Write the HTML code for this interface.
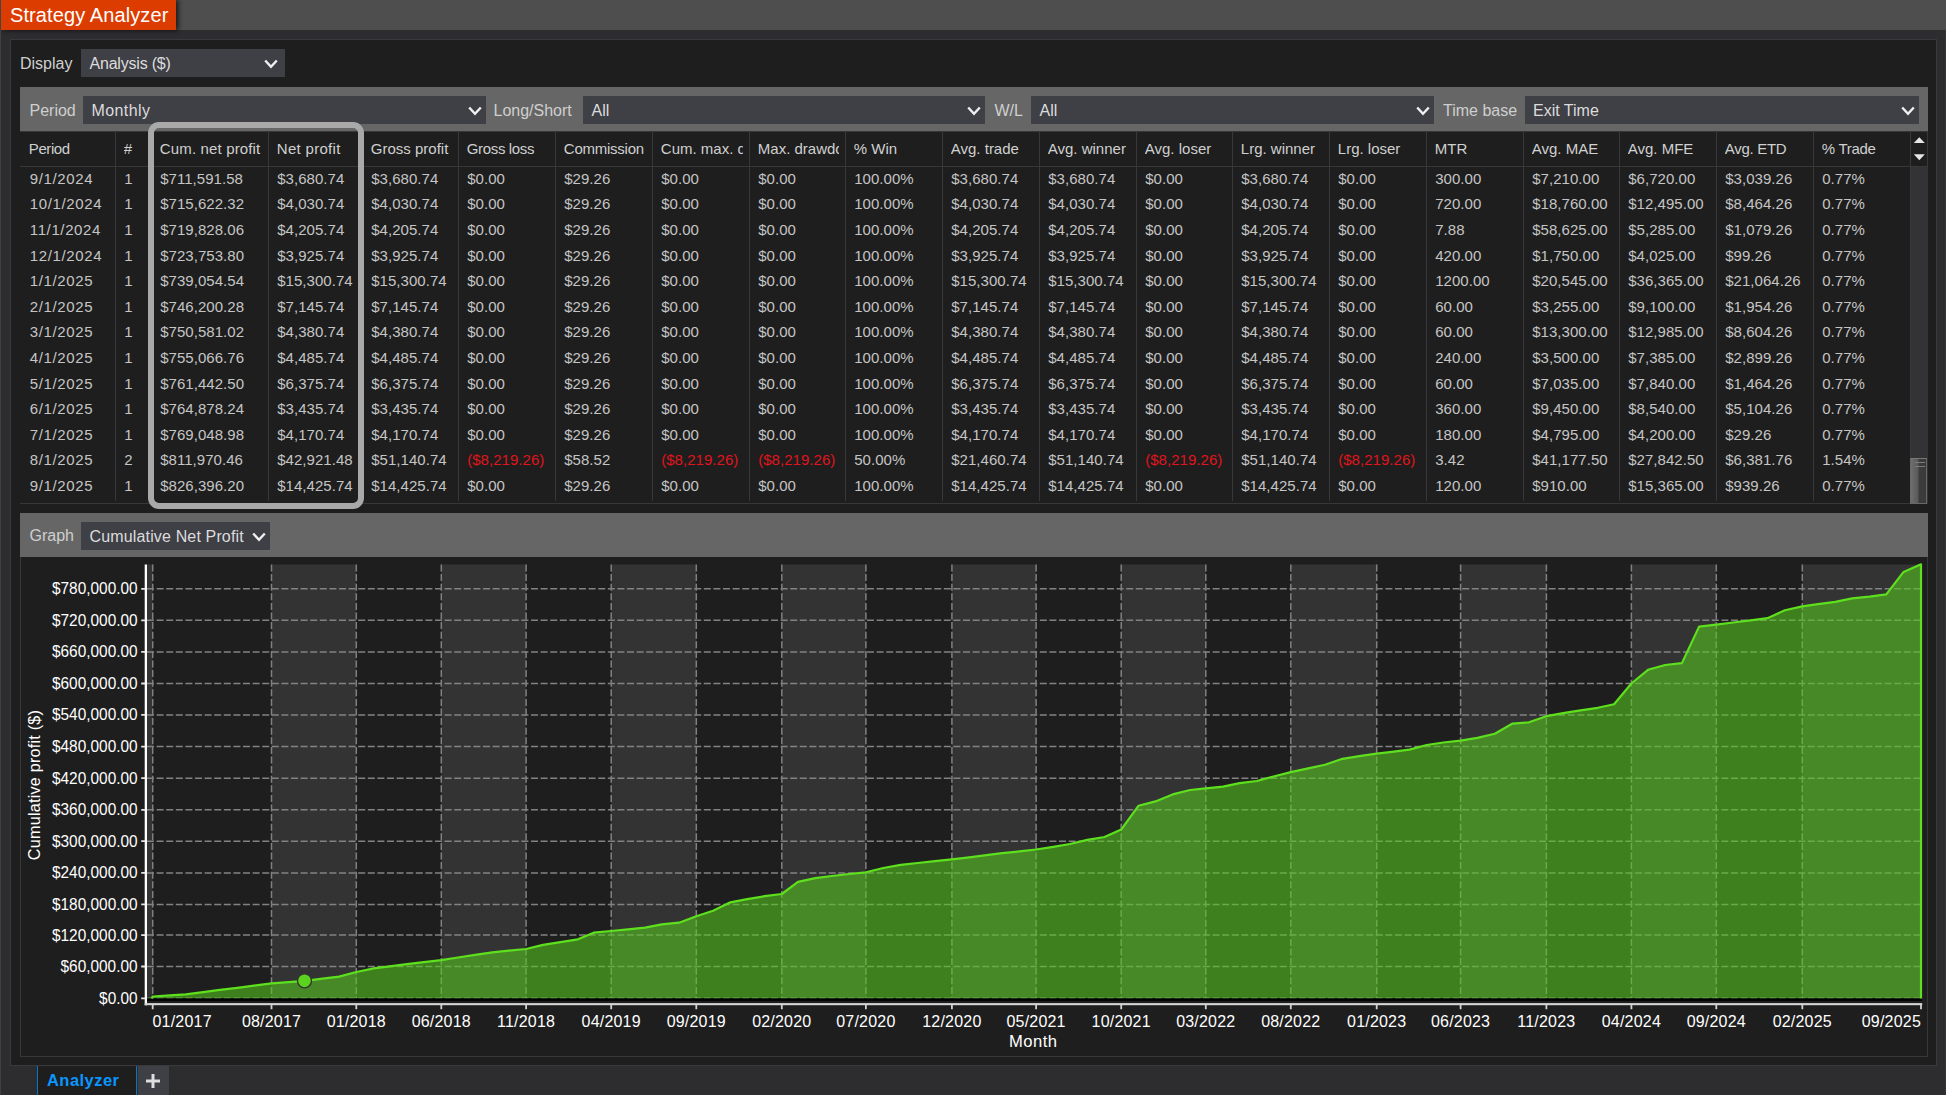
<!DOCTYPE html>
<html lang="en"><head><meta charset="utf-8"><title>Strategy Analyzer</title>
<style>
*{box-sizing:border-box}
html,body{margin:0;padding:0}
body{width:1946px;height:1095px;overflow:hidden;background:#2d2d30;position:relative;
 font-family:"Liberation Sans",sans-serif;color:#ccc}
.abs{position:absolute}
.t{position:absolute;white-space:nowrap;line-height:1}
#titlebar{left:0;top:0;width:1946px;height:30px;background:#4e4e4e}
#tab{left:1px;top:0;width:175px;height:29.5px;background:#dc3c00;box-shadow:2px 0 5px rgba(0,0,0,.75)}
#tabtxt{left:10px;top:5px;font-size:20px;color:#fff;letter-spacing:0.1px}
#edgeL{left:0;top:30px;width:1px;height:1065px;background:#3f3f44}
#panel{left:10px;top:39px;width:1927px;height:1027px;background:#1e1e1e;border:1px solid #3a3a3e}
.sel{position:absolute;background:#3f3f46}
.lbl{font-size:16px;color:#cfcfcf}
.seltxt{font-size:16px;color:#dcdcdc}
.bar{position:absolute;background:#666}
#tbl{left:20px;top:131px;width:1908px;height:373px;border:1px solid #38383b;border-left:none}
.vs{position:absolute;width:1px;background:#38383b;top:131px;height:370px}
.th{position:absolute;top:139.7px;font-size:15px;color:#d0d0d0;white-space:nowrap;overflow:hidden;line-height:17px;height:18px;letter-spacing:0px}
.td{position:absolute;font-size:15px;color:#c5c5c5;white-space:nowrap;line-height:17px;height:17px;letter-spacing:0.04px}
.dt{letter-spacing:0.62px;margin-left:0.6px}
.neg{color:#e0141c}
#hl{left:148px;top:122px;width:216px;height:387px;border:6px solid #a9a9a9;border-radius:11px}
#chartbox{left:20px;top:557px;width:1908px;height:499.5px;border:1px solid #38383b;border-top:none}
#btab{left:37px;top:1065.5px;width:100px;height:30px;background:#1e1e1e;border-left:1px solid #0b74c4;border-right:1px solid #0b74c4}
#btabtxt{left:47px;top:1071.5px;font-size:16.5px;font-weight:bold;color:#0a96ff;letter-spacing:0.45px}
#bplus{left:137.5px;top:1065.5px;width:31px;height:30px;background:#3f3f46}
</style></head><body>
<div id="titlebar" class="abs"></div>
<div id="tab" class="abs"></div><div id="tabtxt" class="t">Strategy Analyzer</div>
<div id="edgeL" class="abs"></div>
<div class="abs" style="left:1945px;top:30px;width:1px;height:1065px;background:#36363a"></div>
<div id="panel" class="abs"></div>
<div class="t lbl" style="left:20px;top:55.6px">Display</div>
<div class="sel" style="left:81px;top:49px;width:204px;height:28px"></div><div class="t seltxt" style="left:89.5px;top:55.6px;letter-spacing:-0.2px">Analysis ($)</div><svg class="abs" style="left:263.5px;top:58.5px" width="14" height="10" viewBox="0 0 14 10"><path d="M1.2 1.5 L7 7.8 L12.8 1.5" fill="none" stroke="#f0f0f0" stroke-width="2.4" stroke-linejoin="miter"/></svg>
<div class="bar" style="left:20px;top:87px;width:1908px;height:44px"></div>
<div class="t lbl" style="left:29.5px;top:102.6px">Period</div>
<div class="sel" style="left:83px;top:96px;width:402.5px;height:27.7px"></div><div class="t seltxt" style="left:91.5px;top:102.6px;letter-spacing:0.4px">Monthly</div><svg class="abs" style="left:467.5px;top:105.5px" width="14" height="10" viewBox="0 0 14 10"><path d="M1.2 1.5 L7 7.8 L12.8 1.5" fill="none" stroke="#f0f0f0" stroke-width="2.4" stroke-linejoin="miter"/></svg>
<div class="t lbl" style="left:493.5px;top:102.6px">Long/Short</div>
<div class="sel" style="left:583px;top:96px;width:402px;height:27.7px"></div><div class="t seltxt" style="left:591.5px;top:102.6px">All</div><svg class="abs" style="left:967px;top:105.5px" width="14" height="10" viewBox="0 0 14 10"><path d="M1.2 1.5 L7 7.8 L12.8 1.5" fill="none" stroke="#f0f0f0" stroke-width="2.4" stroke-linejoin="miter"/></svg>
<div class="t lbl" style="left:994.5px;top:102.6px">W/L</div>
<div class="sel" style="left:1031px;top:96px;width:403px;height:27.7px"></div><div class="t seltxt" style="left:1039.5px;top:102.6px">All</div><svg class="abs" style="left:1416px;top:105.5px" width="14" height="10" viewBox="0 0 14 10"><path d="M1.2 1.5 L7 7.8 L12.8 1.5" fill="none" stroke="#f0f0f0" stroke-width="2.4" stroke-linejoin="miter"/></svg>
<div class="t lbl" style="left:1443px;top:102.6px">Time base</div>
<div class="sel" style="left:1524.5px;top:96px;width:394px;height:27.7px"></div><div class="t seltxt" style="left:1533px;top:102.6px">Exit Time</div><svg class="abs" style="left:1900.5px;top:105.5px" width="14" height="10" viewBox="0 0 14 10"><path d="M1.2 1.5 L7 7.8 L12.8 1.5" fill="none" stroke="#f0f0f0" stroke-width="2.4" stroke-linejoin="miter"/></svg>
<div id="tbl" class="abs"></div>
<div class="abs" style="left:20px;top:165.5px;width:1907px;height:1px;background:#38383b"></div>
<div class="vs" style="left:115px"></div>
<div class="vs" style="left:151px"></div>
<div class="vs" style="left:268px"></div>
<div class="vs" style="left:362px"></div>
<div class="vs" style="left:458px"></div>
<div class="vs" style="left:555px"></div>
<div class="vs" style="left:652px"></div>
<div class="vs" style="left:749px"></div>
<div class="vs" style="left:845px"></div>
<div class="vs" style="left:942px"></div>
<div class="vs" style="left:1039px"></div>
<div class="vs" style="left:1136px"></div>
<div class="vs" style="left:1232px"></div>
<div class="vs" style="left:1329px"></div>
<div class="vs" style="left:1426px"></div>
<div class="vs" style="left:1523px"></div>
<div class="vs" style="left:1619px"></div>
<div class="vs" style="left:1716px"></div>
<div class="vs" style="left:1813px"></div>
<div class="vs" style="left:1910px"></div>
<div class="abs" style="left:1911px;top:166.5px;width:16.5px;height:337px;background:#333336"></div>
<div class="abs" style="left:1909.5px;top:457.5px;width:17.5px;height:46px;background:linear-gradient(90deg,#6e6e6e 0%,#5a5a5a 45%,#3c3c3c 55%,#3a3a3a 100%);border:1px solid #686868;border-top-color:#787878"></div>
<div class="abs" style="left:1914.5px;top:461.5px;width:10.5px;height:1px;background:#7c7c7c"></div>
<div class="abs" style="left:1914.5px;top:466px;width:10.5px;height:1px;background:#7c7c7c"></div>
<svg class="abs" style="left:1911px;top:134px" width="17" height="30" viewBox="0 0 17 30"><path d="M8.3 3.2 L13.8 9 L2.8 9 Z M2.8 20.3 L13.8 20.3 L8.3 26.2 Z" fill="#e6e6e6"/></svg>
<div class="th" style="left:28.8px;width:80.4px;letter-spacing:-0.4px">Period</div>
<div class="th" style="left:123.8px;width:21.4px">#</div>
<div class="th" style="left:159.8px;width:102.4px;letter-spacing:0.15px">Cum. net profit</div>
<div class="th" style="left:276.8px;width:79.4px;letter-spacing:0.3px">Net profit</div>
<div class="th" style="left:370.8px;width:81.4px">Gross profit</div>
<div class="th" style="left:466.8px;width:82.4px;letter-spacing:-0.35px">Gross loss</div>
<div class="th" style="left:563.8px;width:82.4px;letter-spacing:-0.25px">Commission</div>
<div class="th" style="left:660.8px;width:82.4px">Cum. max. drawdown</div>
<div class="th" style="left:757.8px;width:81.4px">Max. drawdown</div>
<div class="th" style="left:853.8px;width:82.4px">% Win</div>
<div class="th" style="left:950.8px;width:82.4px">Avg. trade</div>
<div class="th" style="left:1047.8px;width:82.4px">Avg. winner</div>
<div class="th" style="left:1144.8px;width:81.4px">Avg. loser</div>
<div class="th" style="left:1240.8px;width:82.4px">Lrg. winner</div>
<div class="th" style="left:1337.8px;width:82.4px">Lrg. loser</div>
<div class="th" style="left:1434.8px;width:82.4px">MTR</div>
<div class="th" style="left:1531.8px;width:81.4px">Avg. MAE</div>
<div class="th" style="left:1627.8px;width:82.4px">Avg. MFE</div>
<div class="th" style="left:1724.8px;width:82.4px;letter-spacing:-0.3px">Avg. ETD</div>
<div class="th" style="left:1821.8px;width:82.4px;letter-spacing:-0.3px">% Trade</div>
<div class="td dt" style="left:29.2px;top:169.6px">9/1/2024</div>
<div class="td" style="left:124.2px;top:169.6px">1</div>
<div class="td" style="left:160.2px;top:169.6px">$711,591.58</div>
<div class="td" style="left:277.2px;top:169.6px">$3,680.74</div>
<div class="td" style="left:371.2px;top:169.6px">$3,680.74</div>
<div class="td" style="left:467.2px;top:169.6px">$0.00</div>
<div class="td" style="left:564.2px;top:169.6px">$29.26</div>
<div class="td" style="left:661.2px;top:169.6px">$0.00</div>
<div class="td" style="left:758.2px;top:169.6px">$0.00</div>
<div class="td" style="left:854.2px;top:169.6px">100.00%</div>
<div class="td" style="left:951.2px;top:169.6px">$3,680.74</div>
<div class="td" style="left:1048.2px;top:169.6px">$3,680.74</div>
<div class="td" style="left:1145.2px;top:169.6px">$0.00</div>
<div class="td" style="left:1241.2px;top:169.6px">$3,680.74</div>
<div class="td" style="left:1338.2px;top:169.6px">$0.00</div>
<div class="td" style="left:1435.2px;top:169.6px">300.00</div>
<div class="td" style="left:1532.2px;top:169.6px">$7,210.00</div>
<div class="td" style="left:1628.2px;top:169.6px">$6,720.00</div>
<div class="td" style="left:1725.2px;top:169.6px">$3,039.26</div>
<div class="td" style="left:1822.2px;top:169.6px">0.77%</div>
<div class="td dt" style="left:29.2px;top:195.2px">10/1/2024</div>
<div class="td" style="left:124.2px;top:195.2px">1</div>
<div class="td" style="left:160.2px;top:195.2px">$715,622.32</div>
<div class="td" style="left:277.2px;top:195.2px">$4,030.74</div>
<div class="td" style="left:371.2px;top:195.2px">$4,030.74</div>
<div class="td" style="left:467.2px;top:195.2px">$0.00</div>
<div class="td" style="left:564.2px;top:195.2px">$29.26</div>
<div class="td" style="left:661.2px;top:195.2px">$0.00</div>
<div class="td" style="left:758.2px;top:195.2px">$0.00</div>
<div class="td" style="left:854.2px;top:195.2px">100.00%</div>
<div class="td" style="left:951.2px;top:195.2px">$4,030.74</div>
<div class="td" style="left:1048.2px;top:195.2px">$4,030.74</div>
<div class="td" style="left:1145.2px;top:195.2px">$0.00</div>
<div class="td" style="left:1241.2px;top:195.2px">$4,030.74</div>
<div class="td" style="left:1338.2px;top:195.2px">$0.00</div>
<div class="td" style="left:1435.2px;top:195.2px">720.00</div>
<div class="td" style="left:1532.2px;top:195.2px">$18,760.00</div>
<div class="td" style="left:1628.2px;top:195.2px">$12,495.00</div>
<div class="td" style="left:1725.2px;top:195.2px">$8,464.26</div>
<div class="td" style="left:1822.2px;top:195.2px">0.77%</div>
<div class="td dt" style="left:29.2px;top:220.8px">11/1/2024</div>
<div class="td" style="left:124.2px;top:220.8px">1</div>
<div class="td" style="left:160.2px;top:220.8px">$719,828.06</div>
<div class="td" style="left:277.2px;top:220.8px">$4,205.74</div>
<div class="td" style="left:371.2px;top:220.8px">$4,205.74</div>
<div class="td" style="left:467.2px;top:220.8px">$0.00</div>
<div class="td" style="left:564.2px;top:220.8px">$29.26</div>
<div class="td" style="left:661.2px;top:220.8px">$0.00</div>
<div class="td" style="left:758.2px;top:220.8px">$0.00</div>
<div class="td" style="left:854.2px;top:220.8px">100.00%</div>
<div class="td" style="left:951.2px;top:220.8px">$4,205.74</div>
<div class="td" style="left:1048.2px;top:220.8px">$4,205.74</div>
<div class="td" style="left:1145.2px;top:220.8px">$0.00</div>
<div class="td" style="left:1241.2px;top:220.8px">$4,205.74</div>
<div class="td" style="left:1338.2px;top:220.8px">$0.00</div>
<div class="td" style="left:1435.2px;top:220.8px">7.88</div>
<div class="td" style="left:1532.2px;top:220.8px">$58,625.00</div>
<div class="td" style="left:1628.2px;top:220.8px">$5,285.00</div>
<div class="td" style="left:1725.2px;top:220.8px">$1,079.26</div>
<div class="td" style="left:1822.2px;top:220.8px">0.77%</div>
<div class="td dt" style="left:29.2px;top:246.5px">12/1/2024</div>
<div class="td" style="left:124.2px;top:246.5px">1</div>
<div class="td" style="left:160.2px;top:246.5px">$723,753.80</div>
<div class="td" style="left:277.2px;top:246.5px">$3,925.74</div>
<div class="td" style="left:371.2px;top:246.5px">$3,925.74</div>
<div class="td" style="left:467.2px;top:246.5px">$0.00</div>
<div class="td" style="left:564.2px;top:246.5px">$29.26</div>
<div class="td" style="left:661.2px;top:246.5px">$0.00</div>
<div class="td" style="left:758.2px;top:246.5px">$0.00</div>
<div class="td" style="left:854.2px;top:246.5px">100.00%</div>
<div class="td" style="left:951.2px;top:246.5px">$3,925.74</div>
<div class="td" style="left:1048.2px;top:246.5px">$3,925.74</div>
<div class="td" style="left:1145.2px;top:246.5px">$0.00</div>
<div class="td" style="left:1241.2px;top:246.5px">$3,925.74</div>
<div class="td" style="left:1338.2px;top:246.5px">$0.00</div>
<div class="td" style="left:1435.2px;top:246.5px">420.00</div>
<div class="td" style="left:1532.2px;top:246.5px">$1,750.00</div>
<div class="td" style="left:1628.2px;top:246.5px">$4,025.00</div>
<div class="td" style="left:1725.2px;top:246.5px">$99.26</div>
<div class="td" style="left:1822.2px;top:246.5px">0.77%</div>
<div class="td dt" style="left:29.2px;top:272.1px">1/1/2025</div>
<div class="td" style="left:124.2px;top:272.1px">1</div>
<div class="td" style="left:160.2px;top:272.1px">$739,054.54</div>
<div class="td" style="left:277.2px;top:272.1px">$15,300.74</div>
<div class="td" style="left:371.2px;top:272.1px">$15,300.74</div>
<div class="td" style="left:467.2px;top:272.1px">$0.00</div>
<div class="td" style="left:564.2px;top:272.1px">$29.26</div>
<div class="td" style="left:661.2px;top:272.1px">$0.00</div>
<div class="td" style="left:758.2px;top:272.1px">$0.00</div>
<div class="td" style="left:854.2px;top:272.1px">100.00%</div>
<div class="td" style="left:951.2px;top:272.1px">$15,300.74</div>
<div class="td" style="left:1048.2px;top:272.1px">$15,300.74</div>
<div class="td" style="left:1145.2px;top:272.1px">$0.00</div>
<div class="td" style="left:1241.2px;top:272.1px">$15,300.74</div>
<div class="td" style="left:1338.2px;top:272.1px">$0.00</div>
<div class="td" style="left:1435.2px;top:272.1px">1200.00</div>
<div class="td" style="left:1532.2px;top:272.1px">$20,545.00</div>
<div class="td" style="left:1628.2px;top:272.1px">$36,365.00</div>
<div class="td" style="left:1725.2px;top:272.1px">$21,064.26</div>
<div class="td" style="left:1822.2px;top:272.1px">0.77%</div>
<div class="td dt" style="left:29.2px;top:297.7px">2/1/2025</div>
<div class="td" style="left:124.2px;top:297.7px">1</div>
<div class="td" style="left:160.2px;top:297.7px">$746,200.28</div>
<div class="td" style="left:277.2px;top:297.7px">$7,145.74</div>
<div class="td" style="left:371.2px;top:297.7px">$7,145.74</div>
<div class="td" style="left:467.2px;top:297.7px">$0.00</div>
<div class="td" style="left:564.2px;top:297.7px">$29.26</div>
<div class="td" style="left:661.2px;top:297.7px">$0.00</div>
<div class="td" style="left:758.2px;top:297.7px">$0.00</div>
<div class="td" style="left:854.2px;top:297.7px">100.00%</div>
<div class="td" style="left:951.2px;top:297.7px">$7,145.74</div>
<div class="td" style="left:1048.2px;top:297.7px">$7,145.74</div>
<div class="td" style="left:1145.2px;top:297.7px">$0.00</div>
<div class="td" style="left:1241.2px;top:297.7px">$7,145.74</div>
<div class="td" style="left:1338.2px;top:297.7px">$0.00</div>
<div class="td" style="left:1435.2px;top:297.7px">60.00</div>
<div class="td" style="left:1532.2px;top:297.7px">$3,255.00</div>
<div class="td" style="left:1628.2px;top:297.7px">$9,100.00</div>
<div class="td" style="left:1725.2px;top:297.7px">$1,954.26</div>
<div class="td" style="left:1822.2px;top:297.7px">0.77%</div>
<div class="td dt" style="left:29.2px;top:323.3px">3/1/2025</div>
<div class="td" style="left:124.2px;top:323.3px">1</div>
<div class="td" style="left:160.2px;top:323.3px">$750,581.02</div>
<div class="td" style="left:277.2px;top:323.3px">$4,380.74</div>
<div class="td" style="left:371.2px;top:323.3px">$4,380.74</div>
<div class="td" style="left:467.2px;top:323.3px">$0.00</div>
<div class="td" style="left:564.2px;top:323.3px">$29.26</div>
<div class="td" style="left:661.2px;top:323.3px">$0.00</div>
<div class="td" style="left:758.2px;top:323.3px">$0.00</div>
<div class="td" style="left:854.2px;top:323.3px">100.00%</div>
<div class="td" style="left:951.2px;top:323.3px">$4,380.74</div>
<div class="td" style="left:1048.2px;top:323.3px">$4,380.74</div>
<div class="td" style="left:1145.2px;top:323.3px">$0.00</div>
<div class="td" style="left:1241.2px;top:323.3px">$4,380.74</div>
<div class="td" style="left:1338.2px;top:323.3px">$0.00</div>
<div class="td" style="left:1435.2px;top:323.3px">60.00</div>
<div class="td" style="left:1532.2px;top:323.3px">$13,300.00</div>
<div class="td" style="left:1628.2px;top:323.3px">$12,985.00</div>
<div class="td" style="left:1725.2px;top:323.3px">$8,604.26</div>
<div class="td" style="left:1822.2px;top:323.3px">0.77%</div>
<div class="td dt" style="left:29.2px;top:348.9px">4/1/2025</div>
<div class="td" style="left:124.2px;top:348.9px">1</div>
<div class="td" style="left:160.2px;top:348.9px">$755,066.76</div>
<div class="td" style="left:277.2px;top:348.9px">$4,485.74</div>
<div class="td" style="left:371.2px;top:348.9px">$4,485.74</div>
<div class="td" style="left:467.2px;top:348.9px">$0.00</div>
<div class="td" style="left:564.2px;top:348.9px">$29.26</div>
<div class="td" style="left:661.2px;top:348.9px">$0.00</div>
<div class="td" style="left:758.2px;top:348.9px">$0.00</div>
<div class="td" style="left:854.2px;top:348.9px">100.00%</div>
<div class="td" style="left:951.2px;top:348.9px">$4,485.74</div>
<div class="td" style="left:1048.2px;top:348.9px">$4,485.74</div>
<div class="td" style="left:1145.2px;top:348.9px">$0.00</div>
<div class="td" style="left:1241.2px;top:348.9px">$4,485.74</div>
<div class="td" style="left:1338.2px;top:348.9px">$0.00</div>
<div class="td" style="left:1435.2px;top:348.9px">240.00</div>
<div class="td" style="left:1532.2px;top:348.9px">$3,500.00</div>
<div class="td" style="left:1628.2px;top:348.9px">$7,385.00</div>
<div class="td" style="left:1725.2px;top:348.9px">$2,899.26</div>
<div class="td" style="left:1822.2px;top:348.9px">0.77%</div>
<div class="td dt" style="left:29.2px;top:374.6px">5/1/2025</div>
<div class="td" style="left:124.2px;top:374.6px">1</div>
<div class="td" style="left:160.2px;top:374.6px">$761,442.50</div>
<div class="td" style="left:277.2px;top:374.6px">$6,375.74</div>
<div class="td" style="left:371.2px;top:374.6px">$6,375.74</div>
<div class="td" style="left:467.2px;top:374.6px">$0.00</div>
<div class="td" style="left:564.2px;top:374.6px">$29.26</div>
<div class="td" style="left:661.2px;top:374.6px">$0.00</div>
<div class="td" style="left:758.2px;top:374.6px">$0.00</div>
<div class="td" style="left:854.2px;top:374.6px">100.00%</div>
<div class="td" style="left:951.2px;top:374.6px">$6,375.74</div>
<div class="td" style="left:1048.2px;top:374.6px">$6,375.74</div>
<div class="td" style="left:1145.2px;top:374.6px">$0.00</div>
<div class="td" style="left:1241.2px;top:374.6px">$6,375.74</div>
<div class="td" style="left:1338.2px;top:374.6px">$0.00</div>
<div class="td" style="left:1435.2px;top:374.6px">60.00</div>
<div class="td" style="left:1532.2px;top:374.6px">$7,035.00</div>
<div class="td" style="left:1628.2px;top:374.6px">$7,840.00</div>
<div class="td" style="left:1725.2px;top:374.6px">$1,464.26</div>
<div class="td" style="left:1822.2px;top:374.6px">0.77%</div>
<div class="td dt" style="left:29.2px;top:400.2px">6/1/2025</div>
<div class="td" style="left:124.2px;top:400.2px">1</div>
<div class="td" style="left:160.2px;top:400.2px">$764,878.24</div>
<div class="td" style="left:277.2px;top:400.2px">$3,435.74</div>
<div class="td" style="left:371.2px;top:400.2px">$3,435.74</div>
<div class="td" style="left:467.2px;top:400.2px">$0.00</div>
<div class="td" style="left:564.2px;top:400.2px">$29.26</div>
<div class="td" style="left:661.2px;top:400.2px">$0.00</div>
<div class="td" style="left:758.2px;top:400.2px">$0.00</div>
<div class="td" style="left:854.2px;top:400.2px">100.00%</div>
<div class="td" style="left:951.2px;top:400.2px">$3,435.74</div>
<div class="td" style="left:1048.2px;top:400.2px">$3,435.74</div>
<div class="td" style="left:1145.2px;top:400.2px">$0.00</div>
<div class="td" style="left:1241.2px;top:400.2px">$3,435.74</div>
<div class="td" style="left:1338.2px;top:400.2px">$0.00</div>
<div class="td" style="left:1435.2px;top:400.2px">360.00</div>
<div class="td" style="left:1532.2px;top:400.2px">$9,450.00</div>
<div class="td" style="left:1628.2px;top:400.2px">$8,540.00</div>
<div class="td" style="left:1725.2px;top:400.2px">$5,104.26</div>
<div class="td" style="left:1822.2px;top:400.2px">0.77%</div>
<div class="td dt" style="left:29.2px;top:425.8px">7/1/2025</div>
<div class="td" style="left:124.2px;top:425.8px">1</div>
<div class="td" style="left:160.2px;top:425.8px">$769,048.98</div>
<div class="td" style="left:277.2px;top:425.8px">$4,170.74</div>
<div class="td" style="left:371.2px;top:425.8px">$4,170.74</div>
<div class="td" style="left:467.2px;top:425.8px">$0.00</div>
<div class="td" style="left:564.2px;top:425.8px">$29.26</div>
<div class="td" style="left:661.2px;top:425.8px">$0.00</div>
<div class="td" style="left:758.2px;top:425.8px">$0.00</div>
<div class="td" style="left:854.2px;top:425.8px">100.00%</div>
<div class="td" style="left:951.2px;top:425.8px">$4,170.74</div>
<div class="td" style="left:1048.2px;top:425.8px">$4,170.74</div>
<div class="td" style="left:1145.2px;top:425.8px">$0.00</div>
<div class="td" style="left:1241.2px;top:425.8px">$4,170.74</div>
<div class="td" style="left:1338.2px;top:425.8px">$0.00</div>
<div class="td" style="left:1435.2px;top:425.8px">180.00</div>
<div class="td" style="left:1532.2px;top:425.8px">$4,795.00</div>
<div class="td" style="left:1628.2px;top:425.8px">$4,200.00</div>
<div class="td" style="left:1725.2px;top:425.8px">$29.26</div>
<div class="td" style="left:1822.2px;top:425.8px">0.77%</div>
<div class="td dt" style="left:29.2px;top:451.4px">8/1/2025</div>
<div class="td" style="left:124.2px;top:451.4px">2</div>
<div class="td" style="left:160.2px;top:451.4px">$811,970.46</div>
<div class="td" style="left:277.2px;top:451.4px">$42,921.48</div>
<div class="td" style="left:371.2px;top:451.4px">$51,140.74</div>
<div class="td neg" style="left:467.2px;top:451.4px">($8,219.26)</div>
<div class="td" style="left:564.2px;top:451.4px">$58.52</div>
<div class="td neg" style="left:661.2px;top:451.4px">($8,219.26)</div>
<div class="td neg" style="left:758.2px;top:451.4px">($8,219.26)</div>
<div class="td" style="left:854.2px;top:451.4px">50.00%</div>
<div class="td" style="left:951.2px;top:451.4px">$21,460.74</div>
<div class="td" style="left:1048.2px;top:451.4px">$51,140.74</div>
<div class="td neg" style="left:1145.2px;top:451.4px">($8,219.26)</div>
<div class="td" style="left:1241.2px;top:451.4px">$51,140.74</div>
<div class="td neg" style="left:1338.2px;top:451.4px">($8,219.26)</div>
<div class="td" style="left:1435.2px;top:451.4px">3.42</div>
<div class="td" style="left:1532.2px;top:451.4px">$41,177.50</div>
<div class="td" style="left:1628.2px;top:451.4px">$27,842.50</div>
<div class="td" style="left:1725.2px;top:451.4px">$6,381.76</div>
<div class="td" style="left:1822.2px;top:451.4px">1.54%</div>
<div class="td dt" style="left:29.2px;top:477px">9/1/2025</div>
<div class="td" style="left:124.2px;top:477px">1</div>
<div class="td" style="left:160.2px;top:477px">$826,396.20</div>
<div class="td" style="left:277.2px;top:477px">$14,425.74</div>
<div class="td" style="left:371.2px;top:477px">$14,425.74</div>
<div class="td" style="left:467.2px;top:477px">$0.00</div>
<div class="td" style="left:564.2px;top:477px">$29.26</div>
<div class="td" style="left:661.2px;top:477px">$0.00</div>
<div class="td" style="left:758.2px;top:477px">$0.00</div>
<div class="td" style="left:854.2px;top:477px">100.00%</div>
<div class="td" style="left:951.2px;top:477px">$14,425.74</div>
<div class="td" style="left:1048.2px;top:477px">$14,425.74</div>
<div class="td" style="left:1145.2px;top:477px">$0.00</div>
<div class="td" style="left:1241.2px;top:477px">$14,425.74</div>
<div class="td" style="left:1338.2px;top:477px">$0.00</div>
<div class="td" style="left:1435.2px;top:477px">120.00</div>
<div class="td" style="left:1532.2px;top:477px">$910.00</div>
<div class="td" style="left:1628.2px;top:477px">$15,365.00</div>
<div class="td" style="left:1725.2px;top:477px">$939.26</div>
<div class="td" style="left:1822.2px;top:477px">0.77%</div>
<div id="hl" class="abs"></div>
<div class="bar" style="left:20px;top:512.5px;width:1908px;height:44.5px"></div>
<div class="t lbl" style="left:29.5px;top:528.1px">Graph</div>
<div class="sel" style="left:81px;top:522px;width:189px;height:27.7px"></div><div class="t seltxt" style="left:89.5px;top:528.6px;letter-spacing:0.15px">Cumulative Net Profit</div><svg class="abs" style="left:252px;top:531.5px" width="14" height="10" viewBox="0 0 14 10"><path d="M1.2 1.5 L7 7.8 L12.8 1.5" fill="none" stroke="#f0f0f0" stroke-width="2.4" stroke-linejoin="miter"/></svg>
<div id="chartbox" class="abs"></div>
<svg class="abs" style="left:0;top:0" width="1946" height="1095" viewBox="0 0 1946 1095" font-family="Liberation Sans, sans-serif">
<rect x="147" y="564.5" width="5.7" height="434" fill="#333"/>
<rect x="271.5" y="564.5" width="84.8" height="434" fill="#333"/>
<rect x="441.3" y="564.5" width="84.8" height="434" fill="#333"/>
<rect x="611.2" y="564.5" width="85.1" height="434" fill="#333"/>
<rect x="781.8" y="564.5" width="84.1" height="434" fill="#333"/>
<rect x="951.9" y="564.5" width="84.2" height="434" fill="#333"/>
<rect x="1121.2" y="564.5" width="84.6" height="434" fill="#333"/>
<rect x="1290.8" y="564.5" width="85.9" height="434" fill="#333"/>
<rect x="1460.6" y="564.5" width="85.8" height="434" fill="#333"/>
<rect x="1631.4" y="564.5" width="84.9" height="434" fill="#333"/>
<rect x="1802.3" y="564.5" width="118.7" height="434" fill="#333"/>
<path d="M147 998.3 H1921 M147 966.5 H1921 M147 935.1 H1921 M147 904.4 H1921 M147 872.9 H1921 M147 841.2 H1921 M147 809.8 H1921 M147 778.2 H1921 M147 746.6 H1921 M147 714.9 H1921 M147 683.5 H1921 M147 651.9 H1921 M147 620.3 H1921 M147 588.8 H1921" stroke="#828282" stroke-width="1.5" stroke-dasharray="7 2.6" fill="none"/>
<path d="M152.7 564.5 V998.5 M271.5 564.5 V998.5 M356.3 564.5 V998.5 M441.3 564.5 V998.5 M526.1 564.5 V998.5 M611.2 564.5 V998.5 M696.3 564.5 V998.5 M781.8 564.5 V998.5 M865.9 564.5 V998.5 M951.9 564.5 V998.5 M1036.1 564.5 V998.5 M1121.2 564.5 V998.5 M1205.8 564.5 V998.5 M1290.8 564.5 V998.5 M1376.7 564.5 V998.5 M1460.6 564.5 V998.5 M1546.4 564.5 V998.5 M1631.4 564.5 V998.5 M1716.3 564.5 V998.5 M1802.3 564.5 V998.5" stroke="#808080" stroke-width="1.5" stroke-dasharray="7 2.6" fill="none"/>
<path d="M152.7 998.5 L152.7 996.5 L170.1 995.4 L185.8 994.3 L203.1 992.1 L219.9 989.9 L237.3 987.8 L254.1 985.6 L271.5 983.4 L288.7 982.1 L305.3 980.8 L322.5 978.7 L339.1 976.6 L356.3 972 L373.8 968.4 L389.5 966.3 L407 964.2 L423.8 962.2 L441.3 960.1 L457.9 957.5 L475.1 954.9 L492.3 952.3 L508.9 950.6 L526.1 949 L543 944.9 L560.5 942.1 L577.9 939.3 L593.7 932.7 L611.2 931 L627.9 929.4 L645.1 927.7 L661.8 924.4 L679.1 922.7 L696.3 916.2 L713.1 910.7 L730.4 902.3 L747.2 899.2 L764.5 896.2 L781.8 894 L798 881.8 L815.2 878.1 L831.9 876 L849.2 874 L865.9 872.3 L883.3 868 L900.7 864.9 L917.6 863 L935 861.2 L951.9 859.3 L969.2 857.3 L986.5 855.2 L1002.1 853.2 L1019.4 851.4 L1036.1 849.5 L1053.3 846.9 L1070 844 L1087.3 839.9 L1104.5 837 L1121.2 829.6 L1138.6 805.7 L1155.4 801.4 L1172.7 794.4 L1190.1 790 L1205.8 788.4 L1223 786.6 L1239.7 783.2 L1256.9 781 L1273.6 776.5 L1290.8 772.1 L1308.2 768.4 L1325 764.7 L1342.5 758.8 L1359.3 756.2 L1376.7 753.6 L1393.9 751.6 L1409.5 749.6 L1426.7 745 L1443.4 742.5 L1460.6 740.7 L1477.4 737.9 L1494.8 733.7 L1512.2 723.7 L1529 722.3 L1546.4 716.2 L1563.2 713.2 L1580.5 710.3 L1597.8 707.8 L1614.1 704.2 L1631.4 683.5 L1648 669.8 L1665.2 665 L1681.9 663.1 L1699.1 626.6 L1716.3 624.6 L1733.2 622.5 L1750.6 620.3 L1767.5 618.2 L1784.9 610.2 L1802.3 606.4 L1818 604.1 L1835.3 601.8 L1852.1 598.4 L1869.5 596.6 L1886.3 594.4 L1903.6 571.9 L1921 564.3 L1921 998.5 Z" fill="#56c81e" fill-opacity="0.57"/>
<rect x="147" y="998.3" width="1775" height="2.5" fill="#000"/>
<path d="M151.7 998.5 L152.7 996.5 L170.1 995.4 L185.8 994.3 L203.1 992.1 L219.9 989.9 L237.3 987.8 L254.1 985.6 L271.5 983.4 L288.7 982.1 L305.3 980.8 L322.5 978.7 L339.1 976.6 L356.3 972 L373.8 968.4 L389.5 966.3 L407 964.2 L423.8 962.2 L441.3 960.1 L457.9 957.5 L475.1 954.9 L492.3 952.3 L508.9 950.6 L526.1 949 L543 944.9 L560.5 942.1 L577.9 939.3 L593.7 932.7 L611.2 931 L627.9 929.4 L645.1 927.7 L661.8 924.4 L679.1 922.7 L696.3 916.2 L713.1 910.7 L730.4 902.3 L747.2 899.2 L764.5 896.2 L781.8 894 L798 881.8 L815.2 878.1 L831.9 876 L849.2 874 L865.9 872.3 L883.3 868 L900.7 864.9 L917.6 863 L935 861.2 L951.9 859.3 L969.2 857.3 L986.5 855.2 L1002.1 853.2 L1019.4 851.4 L1036.1 849.5 L1053.3 846.9 L1070 844 L1087.3 839.9 L1104.5 837 L1121.2 829.6 L1138.6 805.7 L1155.4 801.4 L1172.7 794.4 L1190.1 790 L1205.8 788.4 L1223 786.6 L1239.7 783.2 L1256.9 781 L1273.6 776.5 L1290.8 772.1 L1308.2 768.4 L1325 764.7 L1342.5 758.8 L1359.3 756.2 L1376.7 753.6 L1393.9 751.6 L1409.5 749.6 L1426.7 745 L1443.4 742.5 L1460.6 740.7 L1477.4 737.9 L1494.8 733.7 L1512.2 723.7 L1529 722.3 L1546.4 716.2 L1563.2 713.2 L1580.5 710.3 L1597.8 707.8 L1614.1 704.2 L1631.4 683.5 L1648 669.8 L1665.2 665 L1681.9 663.1 L1699.1 626.6 L1716.3 624.6 L1733.2 622.5 L1750.6 620.3 L1767.5 618.2 L1784.9 610.2 L1802.3 606.4 L1818 604.1 L1835.3 601.8 L1852.1 598.4 L1869.5 596.6 L1886.3 594.4 L1903.6 571.9 L1921 564.3 L1921 998.5" fill="none" stroke="#5ee01e" stroke-width="2.2" stroke-linejoin="round"/>
<circle cx="304.5" cy="980.8" r="7" fill="#5ad21e" stroke="#333" stroke-width="1.3"/>
<rect x="144.7" y="564.5" width="2.3" height="440.8" fill="#fff"/>
<rect x="144.7" y="1003.1" width="1777.5" height="2.1" fill="#d4d4d4"/>
<path d="M152.7 1005 V1009.2 M271.5 1005 V1009.2 M356.3 1005 V1009.2 M441.3 1005 V1009.2 M526.1 1005 V1009.2 M611.2 1005 V1009.2 M696.3 1005 V1009.2 M781.8 1005 V1009.2 M865.9 1005 V1009.2 M951.9 1005 V1009.2 M1036.1 1005 V1009.2 M1121.2 1005 V1009.2 M1205.8 1005 V1009.2 M1290.8 1005 V1009.2 M1376.7 1005 V1009.2 M1460.6 1005 V1009.2 M1546.4 1005 V1009.2 M1631.4 1005 V1009.2 M1716.3 1005 V1009.2 M1802.3 1005 V1009.2 M1921 1005 V1009.2" stroke="#d0d0d0" stroke-width="1.8" fill="none"/>
<path d="M141.2 998.3 H145 M141.2 966.5 H145 M141.2 935.1 H145 M141.2 904.4 H145 M141.2 872.9 H145 M141.2 841.2 H145 M141.2 809.8 H145 M141.2 778.2 H145 M141.2 746.6 H145 M141.2 714.9 H145 M141.2 683.5 H145 M141.2 651.9 H145 M141.2 620.3 H145 M141.2 588.8 H145" stroke="#e4e4e4" stroke-width="1.8" fill="none"/>
<text x="99.1" y="1003.8" font-size="16.4" textLength="38.5" lengthAdjust="spacingAndGlyphs" fill="#fff">$0.00</text>
<text x="60.5" y="972" font-size="16.4" textLength="77.1" lengthAdjust="spacingAndGlyphs" fill="#fff">$60,000.00</text>
<text x="52" y="940.6" font-size="16.4" textLength="85.6" lengthAdjust="spacingAndGlyphs" fill="#fff">$120,000.00</text>
<text x="52" y="909.9" font-size="16.4" textLength="85.6" lengthAdjust="spacingAndGlyphs" fill="#fff">$180,000.00</text>
<text x="52" y="878.4" font-size="16.4" textLength="85.6" lengthAdjust="spacingAndGlyphs" fill="#fff">$240,000.00</text>
<text x="52" y="846.7" font-size="16.4" textLength="85.6" lengthAdjust="spacingAndGlyphs" fill="#fff">$300,000.00</text>
<text x="52" y="815.3" font-size="16.4" textLength="85.6" lengthAdjust="spacingAndGlyphs" fill="#fff">$360,000.00</text>
<text x="52" y="783.7" font-size="16.4" textLength="85.6" lengthAdjust="spacingAndGlyphs" fill="#fff">$420,000.00</text>
<text x="52" y="752.1" font-size="16.4" textLength="85.6" lengthAdjust="spacingAndGlyphs" fill="#fff">$480,000.00</text>
<text x="52" y="720.4" font-size="16.4" textLength="85.6" lengthAdjust="spacingAndGlyphs" fill="#fff">$540,000.00</text>
<text x="52" y="689" font-size="16.4" textLength="85.6" lengthAdjust="spacingAndGlyphs" fill="#fff">$600,000.00</text>
<text x="52" y="657.4" font-size="16.4" textLength="85.6" lengthAdjust="spacingAndGlyphs" fill="#fff">$660,000.00</text>
<text x="52" y="625.8" font-size="16.4" textLength="85.6" lengthAdjust="spacingAndGlyphs" fill="#fff">$720,000.00</text>
<text x="52" y="594.2" font-size="16.4" textLength="85.6" lengthAdjust="spacingAndGlyphs" fill="#fff">$780,000.00</text>
<text x="152.5" y="1027" text-anchor="start" font-size="16" letter-spacing="0.2" fill="#fff">01/2017</text>
<text x="271.5" y="1027" text-anchor="middle" font-size="16" letter-spacing="0.2" fill="#fff">08/2017</text>
<text x="356.3" y="1027" text-anchor="middle" font-size="16" letter-spacing="0.2" fill="#fff">01/2018</text>
<text x="441.3" y="1027" text-anchor="middle" font-size="16" letter-spacing="0.2" fill="#fff">06/2018</text>
<text x="526.1" y="1027" text-anchor="middle" font-size="16" letter-spacing="0.2" fill="#fff">11/2018</text>
<text x="611.2" y="1027" text-anchor="middle" font-size="16" letter-spacing="0.2" fill="#fff">04/2019</text>
<text x="696.3" y="1027" text-anchor="middle" font-size="16" letter-spacing="0.2" fill="#fff">09/2019</text>
<text x="781.8" y="1027" text-anchor="middle" font-size="16" letter-spacing="0.2" fill="#fff">02/2020</text>
<text x="865.9" y="1027" text-anchor="middle" font-size="16" letter-spacing="0.2" fill="#fff">07/2020</text>
<text x="951.9" y="1027" text-anchor="middle" font-size="16" letter-spacing="0.2" fill="#fff">12/2020</text>
<text x="1036.1" y="1027" text-anchor="middle" font-size="16" letter-spacing="0.2" fill="#fff">05/2021</text>
<text x="1121.2" y="1027" text-anchor="middle" font-size="16" letter-spacing="0.2" fill="#fff">10/2021</text>
<text x="1205.8" y="1027" text-anchor="middle" font-size="16" letter-spacing="0.2" fill="#fff">03/2022</text>
<text x="1290.8" y="1027" text-anchor="middle" font-size="16" letter-spacing="0.2" fill="#fff">08/2022</text>
<text x="1376.7" y="1027" text-anchor="middle" font-size="16" letter-spacing="0.2" fill="#fff">01/2023</text>
<text x="1460.6" y="1027" text-anchor="middle" font-size="16" letter-spacing="0.2" fill="#fff">06/2023</text>
<text x="1546.4" y="1027" text-anchor="middle" font-size="16" letter-spacing="0.2" fill="#fff">11/2023</text>
<text x="1631.4" y="1027" text-anchor="middle" font-size="16" letter-spacing="0.2" fill="#fff">04/2024</text>
<text x="1716.3" y="1027" text-anchor="middle" font-size="16" letter-spacing="0.2" fill="#fff">09/2024</text>
<text x="1802.3" y="1027" text-anchor="middle" font-size="16" letter-spacing="0.2" fill="#fff">02/2025</text>
<text x="1921" y="1027" text-anchor="end" font-size="16" letter-spacing="0.2" fill="#fff">09/2025</text>
<text x="1033.3" y="1046.8" text-anchor="middle" font-size="16.6" letter-spacing="0.5" fill="#fff">Month</text>
<text transform="translate(40.4 785) rotate(-90)" text-anchor="middle" font-size="16.2" letter-spacing="0.22" fill="#fff">Cumulative profit ($)</text>
</svg>
<div id="btab" class="abs"></div><div id="btabtxt" class="t">Analyzer</div>
<div id="bplus" class="abs"></div>
<svg class="abs" style="left:145px;top:1073px" width="16" height="16" viewBox="0 0 16 16"><path d="M8 1 V15 M1 8 H15" stroke="#dedede" stroke-width="3" fill="none"/></svg>
</body></html>
